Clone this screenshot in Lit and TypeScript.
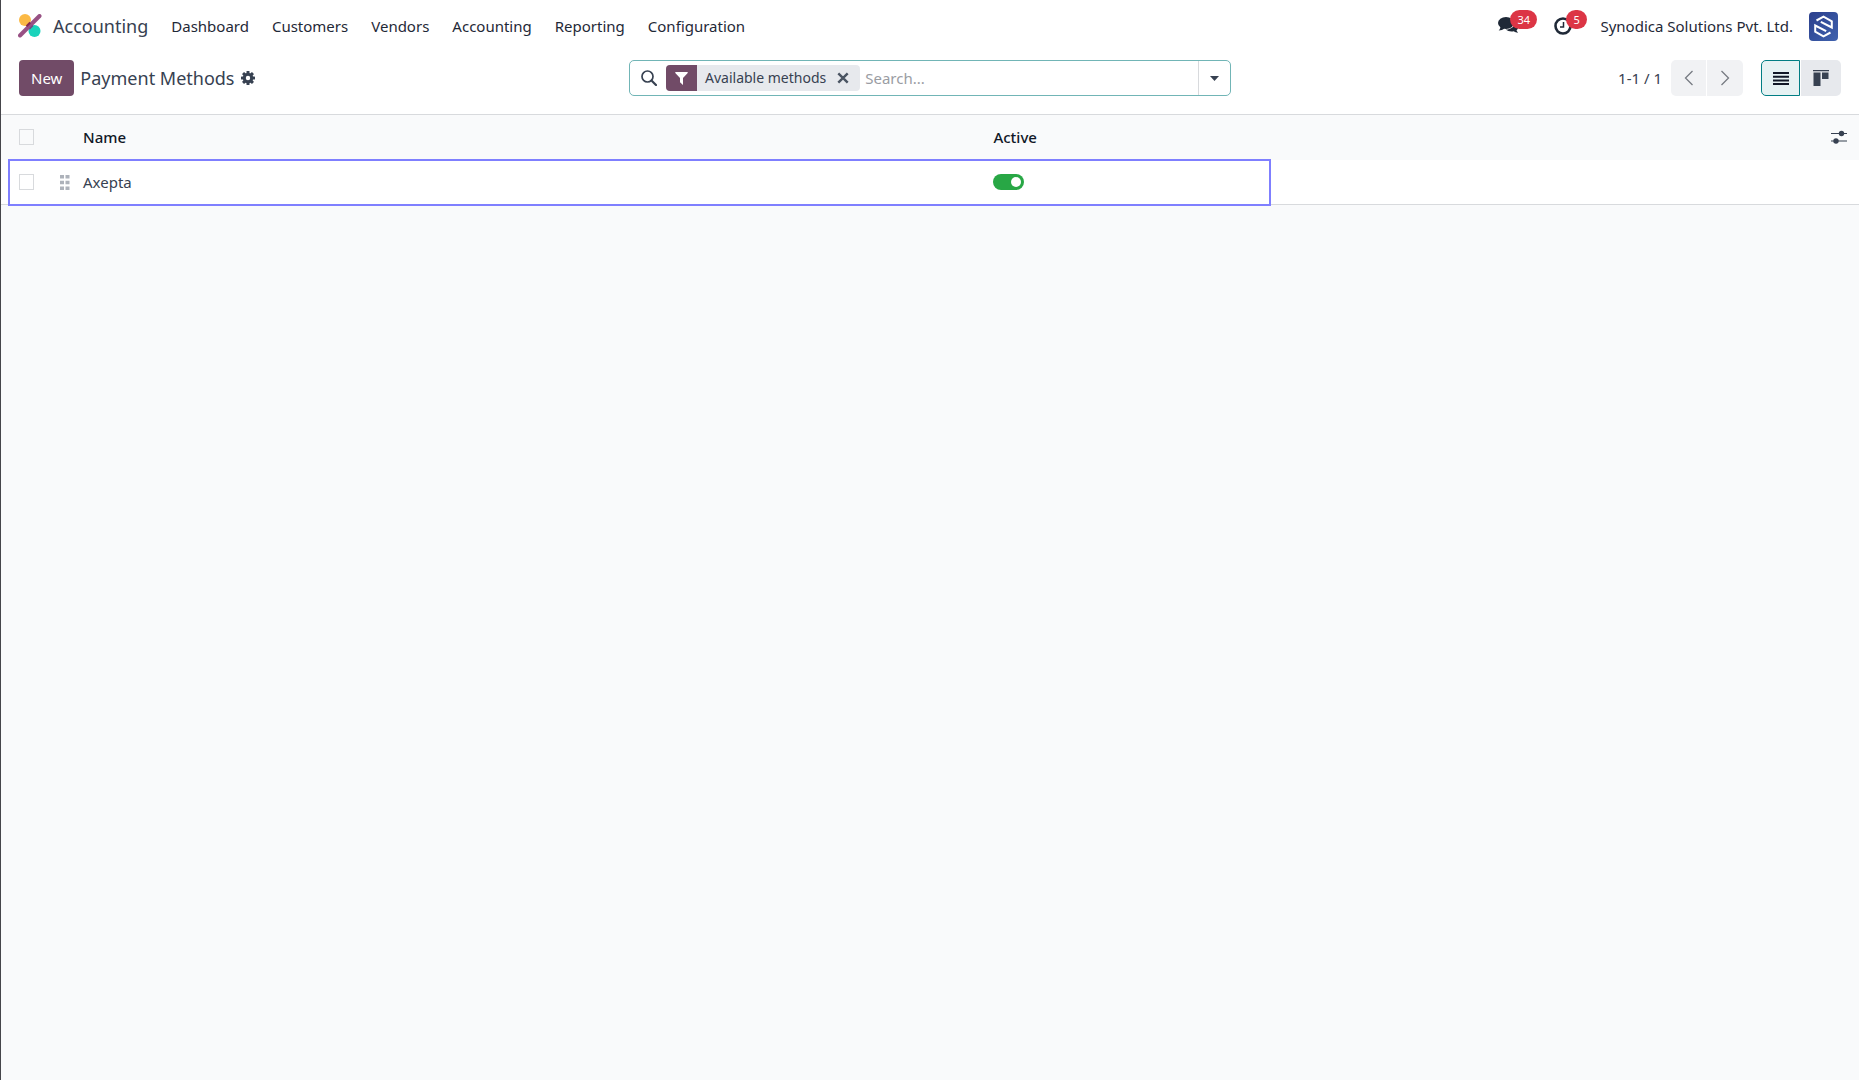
import { LitElement, html, css, svg } from "lit";
import { customElement, state } from "lit/decorators.js";

const menu = ["Dashboard", "Customers", "Vendors", "Accounting", "Reporting", "Configuration"];

interface Method {
  name: string;
  active: boolean;
}

const appLogo = html`<svg width="24" height="24" viewBox="0 0 24 24" aria-hidden="true">
  <circle cx="7" cy="6" r="6" fill="#fbb945" />
  <circle cx="16.500" cy="17" r="6" fill="#1ad3bb" />
  <path d="M2 21.500L21.500 2" stroke="#985184" stroke-width="4" stroke-linecap="round" />
  <path d="M8.500 12.200 12.200 8.500" stroke="#86284f" stroke-width="2" />
  <path d="M11.500 15 15 11.500" stroke="#6f4a80" stroke-width="1.500" />
</svg>`;

const gearIcon = html`<svg width="14" height="14" viewBox="0 0 14 14" aria-hidden="true">
  ${[0, 45, 90, 135].map(
    (a) => svg`<rect x="5.500" y="0" width="3" height="14" rx="0.500" fill="#374151" transform="rotate(${a} 7 7)" />`
  )}
  <circle cx="7" cy="7" r="3.700" fill="#fff" stroke="#374151" stroke-width="3" />
</svg>`;

const chatIcon = html`<svg width="21" height="18" viewBox="0 0 21 18" aria-hidden="true">
  <path d="M17 5c2 1 3.500 2.500 3.500 4.500 0 1.500-.8 2.800-2 3.700.3 1 .9 1.800 1.600 2.500-1.800 0-3.300-.6-4.500-1.400-3 .5-6-.1-7.800-1.700C13 12.500 17 9.500 17 5z" fill="#1f2937" />
  <ellipse cx="8" cy="6" rx="8" ry="6" fill="#1f2937" />
  <path d="M2.500 9.500c0 1.600-.8 3-1.800 4 2.300-.1 4.300-.8 5.800-2.300z" fill="#1f2937" />
</svg>`;

const clockIcon = html`<svg width="18" height="18" viewBox="0 0 18 18" aria-hidden="true">
  <circle cx="9" cy="9" r="7.500" fill="none" stroke="#1f2937" stroke-width="2.600" />
  <path d="M9.500 5v5H6" fill="none" stroke="#1f2937" stroke-width="1.500" />
</svg>`;

const avatar = html`<svg width="29" height="29" viewBox="0 0 29 29" aria-hidden="true">
  <defs>
    <linearGradient id="avatar-fill" x1="0" y1="0" x2="1" y2="1">
      <stop offset="0" stop-color="#2b3f8c" />
      <stop offset="1" stop-color="#3f62ae" />
    </linearGradient>
  </defs>
  <rect width="29" height="29" rx="4" fill="url(#avatar-fill)" />
  <g fill="none" stroke="#fff" stroke-width="2">
    <path d="M7.500 8.500 14.500 4.700l8.300 4.600v6.200l-11-5.700" />
    <path d="M21.500 20.500 14.500 24.300l-8.300-4.600v-6.200l11 5.700" />
  </g>
</svg>`;

const searchIcon = html`<svg width="16" height="16" viewBox="0 0 16 16" aria-hidden="true">
  <circle cx="6.500" cy="6.500" r="5.500" fill="none" stroke="#374151" stroke-width="1.700" />
  <path d="M10.500 10.500 15 15" stroke="#374151" stroke-width="2.200" stroke-linecap="round" />
</svg>`;

const filterIcon = html`<svg width="13" height="13" viewBox="0 0 13 13" aria-hidden="true">
  <path d="M0.300 0h12.400v1L8 6v7L5 10.300V6L0.300 1z" fill="#fff" />
</svg>`;

const closeIcon = html`<svg width="12" height="12" viewBox="0 0 12 12" aria-hidden="true">
  <path d="M1.300 1.300l9.400 9.400M10.700 1.300l-9.400 9.400" stroke="#4b5563" stroke-width="2.400" />
</svg>`;

const caretIcon = html`<svg width="9" height="5" viewBox="0 0 9 5" aria-hidden="true">
  <path d="M0 0h9L4.500 5z" fill="#374151" />
</svg>`;

const chevron = (d: string) => html`<svg width="10" height="16" viewBox="0 0 10 16" aria-hidden="true">
  <path d=${d} fill="none" stroke="#777b82" stroke-width="1.300" />
</svg>`;

const listIcon = html`<svg width="16" height="13" viewBox="0 0 16 13" aria-hidden="true">
  <path d="M0 1h16M0 4.700h16M0 8.400h16M0 12h16" stroke="#111827" stroke-width="2" />
</svg>`;

const kanbanIcon = html`<svg width="16" height="16" viewBox="0 0 16 16" aria-hidden="true">
  <path d="M0 0h16v1.200H0zM0.500 2.500h7V16h-7zM9 2.500h6.500v6.500H9z" fill="#374151" />
</svg>`;

const slidersIcon = html`<svg width="16" height="14" viewBox="0 0 16 14" aria-hidden="true">
  <path d="M0 3.500h16M0 11h16" stroke="#374151" stroke-width="1.200" />
  <circle cx="10.500" cy="3.500" r="2.700" fill="#374151" />
  <circle cx="5" cy="11" r="2.700" fill="#374151" />
</svg>`;

const gripIcon = html`<svg width="10" height="15" viewBox="0 0 10 15" aria-hidden="true">
  <path d="M0 0h4v3.500H0zM5.500 0h4v3.500h-4zM0 5.700h4v3.500H0zM5.500 5.700h4v3.500h-4zM0 11.400h4v3.500H0zM5.500 11.400h4v3.500h-4z" fill="#adb2ba" />
</svg>`;

@customElement("app-root")
export class AppRoot extends LitElement {
  @state() private methods: Method[] = [{ name: "Axepta", active: true }];

  static styles = css`
    :host {
      display: flex;
      flex-direction: column;
      box-sizing: border-box;
      min-height: 100vh;
      padding-right: 10px;
      border-left: 1px solid #45454a;
      background: #fff;
      color: #374151;
      font: 15px/20px "Noto Sans", sans-serif;
    }
    *,
    *::before {
      box-sizing: border-box;
    }
    svg {
      display: block;
      flex: none;
    }
    button {
      display: flex;
      align-items: center;
      justify-content: center;
      margin: 0;
      padding: 0;
      border: 0;
      background: none;
      color: inherit;
      font: inherit;
      cursor: pointer;
    }
    a {
      color: inherit;
      text-decoration: none;
    }
    .navbar {
      display: flex;
      align-items: center;
      height: 52px;
      padding: 0 21px 0 17px;
      color: #1f2937;
    }
    .brand {
      display: flex;
      align-items: center;
      gap: 11px;
      margin-right: 23px;
      color: #374151;
      font-size: 18px;
    }
    .menu {
      display: flex;
      gap: 23px;
    }
    .tray {
      display: flex;
      align-items: center;
      margin-left: auto;
    }
    .notify {
      position: relative;
      margin-right: 28px;
    }
    .notify-chat {
      margin-right: 35px;
    }
    .badge {
      position: absolute;
      left: 12px;
      top: -7px;
      padding: 0 7px;
      border-radius: 10px;
      background: #dc3545;
      color: #fff;
      font-size: 11px;
      line-height: 19px;
    }
    .user {
      gap: 16px;
    }
    .control {
      display: grid;
      grid-template-columns: 1fr 602px 1fr;
      align-items: center;
      height: 62px;
      padding: 0 18px 10px;
    }
    .crumbs {
      display: flex;
      align-items: center;
      gap: 6px;
    }
    .new {
      height: 36px;
      padding: 0 12px;
      border-radius: 4px;
      background: #714b67;
      color: #fff;
    }
    .title {
      margin: 0;
      font-size: 18px;
      font-weight: 400;
    }
    .search {
      display: flex;
      align-items: center;
      height: 36px;
      padding-left: 11px;
      border: 1px solid #71b5b6;
      border-radius: 5px;
    }
    .facet {
      display: flex;
      align-items: stretch;
      height: 26px;
      margin: 0 5px 0 9px;
      overflow: hidden;
      border-radius: 4px;
      background: #e7e9ed;
      font-size: 14px;
      line-height: 26px;
    }
    .funnel {
      display: flex;
      align-items: center;
      justify-content: center;
      width: 31px;
      margin-right: 8px;
      background: #714b67;
    }
    .remove {
      width: 34px;
    }
    .query {
      flex: 1;
      min-width: 0;
      padding: 0;
      border: 0;
      outline: 0;
      background: none;
      color: inherit;
      font: inherit;
    }
    .query::placeholder {
      color: #9a9da3;
      opacity: 1;
    }
    .toggle-search {
      width: 32px;
      height: 34px;
      border-left: 1px solid #d8dadd;
    }
    .tools {
      display: flex;
      align-items: center;
      justify-content: flex-end;
    }
    .range {
      margin-right: 9px;
    }
    .pager {
      display: grid;
      grid-template-columns: 35px 36px;
      gap: 1px;
      margin-right: 18px;
      overflow: hidden;
      border-radius: 5px;
    }
    .page {
      height: 36px;
      background: #f1f2f4;
    }
    .views {
      display: flex;
      gap: 1px;
    }
    .view {
      width: 40px;
      height: 36px;
      border-radius: 0 5px 5px 0;
      background: #e7e9ed;
    }
    .view-on {
      width: 39px;
      border: 1px solid #017e84;
      border-radius: 5px 0 0 5px;
      background: #e6f2f3;
    }
    .content {
      flex: 1;
      border-top: 1px solid #d8dadd;
      background: #f9fafb;
    }
    .list {
      width: 100%;
      border-collapse: separate;
      border-spacing: 0;
      table-layout: fixed;
    }
    .list th,
    .list td {
      height: 45px;
      padding: 0;
      text-align: left;
      vertical-align: middle;
    }
    .list th {
      padding-bottom: 1px;
      color: #111827;
      font-weight: 500;
    }
    .list td {
      border-bottom: 1px solid #d8dadd;
      background: #fff;
    }
    .row {
      position: relative;
    }
    .mark::after {
      content: "";
      position: absolute;
      box-sizing: border-box;
      inset: -1px auto -1px 7px;
      width: 68%;
      border: 2px solid #7f7fff;
      pointer-events: none;
    }
    .col-check {
      width: 59px;
    }
    .col-grip {
      width: 23px;
    }
    .col-name {
      width: 49%;
    }
    .col-options {
      width: 28px;
    }
    .check {
      appearance: none;
      display: block;
      width: 15px;
      height: 16px;
      margin: 0 0 0 18px;
      border: 1px solid #d8dadd;
    }
    .check:checked {
      background: #714b67;
    }
    .switch {
      appearance: none;
      display: block;
      width: 31px;
      height: 16px;
      margin: 0;
      padding: 3px;
      border-radius: 8px;
      background: #adb5bd;
    }
    .switch::before {
      content: "";
      display: block;
      width: 10px;
      height: 10px;
      border-radius: 5px;
      background: #fff;
    }
    .switch:checked {
      background: #28a745;
    }
    .switch:checked::before {
      margin-left: auto;
    }
  `;

  private toggle(index: number) {
    this.methods = this.methods.map((m, i) => (i === index ? { ...m, active: !m.active } : m));
  }

  render() {
    return html`
      <header class="navbar">
        <a class="brand" href="#">${appLogo}<span>Accounting</span></a>
        <nav class="menu">${menu.map((m) => html`<a href="#">${m}</a>`)}</nav>
        <div class="tray">
          <button class="notify notify-chat" aria-label="Messages">${chatIcon}<span class="badge">34</span></button>
          <button class="notify" aria-label="Activities">${clockIcon}<span class="badge">5</span></button>
          <button class="user"><span>Synodica Solutions Pvt. Ltd.</span>${avatar}</button>
        </div>
      </header>
      <section class="control">
        <div class="crumbs">
          <button class="new">New</button>
          <h1 class="title">Payment Methods</h1>
          <button aria-label="Actions">${gearIcon}</button>
        </div>
        <div class="search" role="search">
          ${searchIcon}
          <div class="facet">
            <span class="funnel">${filterIcon}</span>
            <span>Available methods</span>
            <button class="remove" aria-label="Remove filter">${closeIcon}</button>
          </div>
          <input class="query" type="text" placeholder="Search..." aria-label="Search" />
          <button class="toggle-search" aria-label="Search options">${caretIcon}</button>
        </div>
        <div class="tools">
          <span class="range">1-1 / 1</span>
          <div class="pager">
            <button class="page" aria-label="Previous">${chevron("M8.500 1L1.500 8l7 7")}</button>
            <button class="page" aria-label="Next">${chevron("M1.500 1l7 7-7 7")}</button>
          </div>
          <div class="views">
            <button class="view view-on" aria-label="List view">${listIcon}</button>
            <button class="view" aria-label="Kanban view">${kanbanIcon}</button>
          </div>
        </div>
      </section>
      <main class="content">
        <table class="list">
          <thead>
            <tr>
              <th class="col-check"><input class="check" type="checkbox" aria-label="Select all" /></th>
              <th class="col-grip"></th>
              <th class="col-name">Name</th>
              <th>Active</th>
              <th class="col-options"><button aria-label="Optional columns">${slidersIcon}</button></th>
            </tr>
          </thead>
          <tbody>
            ${this.methods.map(
              (m, i) => html`<tr class="row">
                <td class="mark"><input class="check" type="checkbox" aria-label="Select ${m.name}" /></td>
                <td>${gripIcon}</td>
                <td>${m.name}</td>
                <td>
                  <input class="switch" type="checkbox" aria-label="${m.name} active" .checked=${m.active} @change=${() => this.toggle(i)} />
                </td>
                <td></td>
              </tr>`
            )}
          </tbody>
        </table>
      </main>
    `;
  }
}
